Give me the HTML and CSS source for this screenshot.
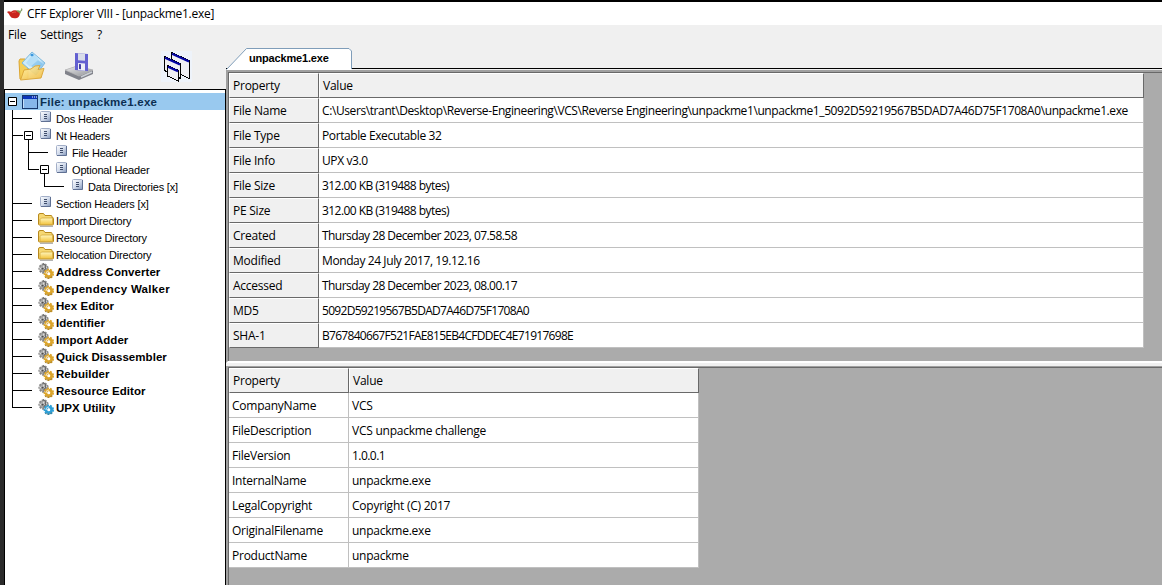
FILE: index.html
```html
<!DOCTYPE html>
<html lang="en">
<head>
<meta charset="utf-8">
<title>CFF Explorer VIII - [unpackme1.exe]</title>
<link rel="stylesheet" href="styles.css">
</head>
<body>
<svg width="0" height="0" class="defs">
  <defs>
    <linearGradient id="gPage" x1="0" y1="0" x2="1" y2="1"><stop offset="0" stop-color="#fff"/><stop offset=".5" stop-color="#d3dcec"/><stop offset="1" stop-color="#8397bb"/></linearGradient>
    <linearGradient id="gFold" x1="0" y1="0" x2="0" y2="1"><stop offset="0" stop-color="#fff6bd"/><stop offset="1" stop-color="#f3c440"/></linearGradient>
    <linearGradient id="gOpen" x1="0" y1="0" x2="1" y2="1"><stop offset="0" stop-color="#fff3b0"/><stop offset="1" stop-color="#f0b93a"/></linearGradient>
    <linearGradient id="gBlue" x1="0" y1="0" x2="1" y2="1"><stop offset="0" stop-color="#b9e2fa"/><stop offset=".5" stop-color="#d9f0fc"/><stop offset="1" stop-color="#58a9e0"/></linearGradient>
    <linearGradient id="gDrive" x1="0" y1="0" x2="1" y2="1"><stop offset="0" stop-color="#ececec"/><stop offset="1" stop-color="#8e9096"/></linearGradient>
    <symbol id="page" viewBox="0 0 12 12">
      <rect x=".5" y=".5" width="10" height="10" rx="1" fill="url(#gPage)" stroke="#a3afc8"/>
      <path d="M1 10.500h9.500V1" fill="none" stroke="#5f7093"/>
      <path d="M4 3.500h3M4 5.500h3M4 7.500h3" stroke="#3f4d6b"/>
    </symbol>
    <symbol id="folder" viewBox="0 0 16 14">
      <path d="M.5 11V2Q.5 .5 2 .5H5.500l1.500 2H13q1 0 1 1v1h.5q1 0 1 1v5.500q0 1-1 1H1.500Q.5 12 .5 11Z" fill="#f6d873" stroke="#b8891d"/>
      <path d="M3.500 5H14.500V11.500H2V6.500Z" fill="url(#gFold)" stroke="#d4a93a" stroke-width=".8"/>
      <path d="M2 13.300h13" stroke="#777" stroke-width=".7"/>
    </symbol>
    <symbol id="gears" viewBox="0 0 16 16">
      <ellipse cx="5.500" cy="5.500" rx="4.200" ry="4.400" fill="#a5a5a5" stroke="#868686" stroke-width="1.800" stroke-dasharray="1.900 1.100"/>
      <path d="M1.500 6l3.500-1.500L7 1.500M6 6l3-2" fill="none" stroke="#dedede" stroke-width="1.200"/>
      <path d="M5 .5l2.500 2v3L5.500 8.500" fill="none" stroke="#6a6a6a" stroke-width="1.200"/>
      <circle cx="4.500" cy="5.500" r="1.100" fill="#4c4c4c"/>
      <circle cx="10.800" cy="10.800" r="4.300" fill="none" stroke="currentColor" stroke-width="1.800" stroke-dasharray="1.900 1.100"/>
      <circle cx="10.800" cy="10.800" r="2.800" fill="none" stroke="currentColor" stroke-width="2.600"/>
      <path d="M8 11a3 3 0 0 1 3-3" fill="none" stroke="#fff" stroke-opacity=".65" stroke-width="1.200"/>
      <path d="M7 14.500q4 2 7.500-1" fill="none" stroke="#4b3a12" stroke-opacity=".35"/>
      <circle cx="10.800" cy="10.800" r="1.200" fill="#fff"/>
    </symbol>
    <symbol id="win" viewBox="0 0 16 14">
      <rect x=".5" y=".5" width="15" height="13" fill="#86b7ea" stroke="#16386c"/>
      <path d="M1 2.500h14" stroke="#0b35ba" stroke-width="3"/>
      <path d="M10 2h1M12 2h1M14 2h1" stroke="#fff"/>
      <path d="M1.500 4v9" stroke="#c4e0fa"/>
    </symbol>
    <symbol id="minus" viewBox="0 0 9 9"><path d="M.5.500h8v8h-8z" fill="#fff" stroke="#000"/><path d="M2 4.500h5" stroke="#000"/></symbol>
  </defs>
</svg>
<div class="window">
  <header class="titlebar">
    <svg class="chili" viewBox="0 0 16 12"><path d="M0 4Q1.500 2.500 4 3.700 7 1.700 9.500 2.500q3 .8 3.500 3-.5 4-4 4.700Q4.500 11 3 8 2 5.500 0 4Z" fill="#c9251d"/><path d="M5 4.800Q7.500 3.500 9 4.300" fill="none" stroke="#e2554a" stroke-width="1.100"/><path d="M9.500 2.500q3-1 4.500 1.500L13 6q-1.500-2-3.500-3Z" fill="#7da35b"/><path d="M13 3.500Q15.500 2.500 14.500 .5" fill="none" stroke="#829c63" stroke-width="1.200"/></svg>
    <span class="t-title">CFF Explorer VIII - [unpackme1.exe]</span>
  </header>
  <nav class="menu"><span>File</span><span>Settings</span><span>?</span></nav>
  <div class="body">
    <aside class="left">
      <div class="toolbar">
        <svg class="open" viewBox="0 0 28 30"><path d="M1 10l1-2h5l3 3v16l-8 1z" fill="#f5cf57" stroke="#dca52f"/><path d="M14 1l13 11-9 12L4 12Z" fill="url(#gBlue)" stroke="#7db9df"/><path d="M8 12l7-9 6 5-9 8z" fill="#a9d8f5" opacity=".7"/><path d="M20 9l5 4-6 7-6-5z" fill="#7fc0ec" opacity=".7"/><path d="M2.500 29L6 19l7-1 4-3 5-.5-2 4 6-1-3 9.500Z" fill="url(#gOpen)" fill-opacity=".9" stroke="#dda93c"/><path d="M14 2.500l2 1.500-2 1.500-2-1.500z" fill="#3794dc"/></svg>
        <svg class="save" viewBox="0 0 30 30"><path d="M1 19l12-4 16 4v4l-14 6L1 23Z" fill="#80828a"/><path d="M1 19l12-4 16 4-14 6Z" fill="url(#gDrive)" stroke="#b9b9b9" stroke-width=".7"/><path d="M17 26l11-5" stroke="#ccd0d6" stroke-width="1.500"/><path d="M11 2l13 1v17l-13-1Z" fill="#625fd0"/><path d="M14 2.200l7 .5v7l-7-.5Z" fill="#d8dce9"/><path d="M14 12l7 .5v7.200l-7-.6Z" fill="#eceef5"/><path d="M15 13v5l2 .2v-5Z" fill="#4341a8"/></svg>
        <svg class="wins" viewBox="0 0 31 31"><rect width="31" height="31" fill="#eef3fa"/><g stroke="#000" shape-rendering="crispEdges"><path d="M10.500 1.500l18 8v18l-18-8z" fill="#f0f0f4"/><path d="M3.500 5.500l16 7v15l-16-8z" fill="#f0f0f4"/><path d="M6.500 14.500l11 5v10.500l-11-5z" fill="#f0f0f4"/></g><path d="M11 2.800l17 7.600M4 6.800l15 6.600M7 15.800l10 4.500" stroke="#0505a5" stroke-width="2.200"/></svg>
      </div>
      <div class="tree">
        <svg class="lines" viewBox="0 0 60 320" shape-rendering="crispEdges"><path d="M7.500 12V318M8 28.500H27M8 45.500H18M8 113.500H27M8 130.500H27M8 147.500H27M8 164.500H27M8 181.500H27M8 198.500H27M8 215.500H27M8 232.500H27M8 249.500H27M8 266.500H27M8 283.500H27M8 300.500H27M7 317.500H27M23.500 46V80M24 62.500H43M24 79.500H34M39.500 80V97M39 96.500H59" stroke="#000" fill="none"/></svg>
        <div class="row root"><svg class="box"><use href="#minus"/></svg><svg class="i-win"><use href="#win"/></svg><span class="b l-root">File: unpackme1.exe</span></div>
        <div class="row d1"><svg class="i-page"><use href="#page"/></svg><span>Dos Header</span></div>
        <div class="row d1"><svg class="box"><use href="#minus"/></svg><svg class="i-page"><use href="#page"/></svg><span>Nt Headers</span></div>
        <div class="row d2"><svg class="i-page"><use href="#page"/></svg><span>File Header</span></div>
        <div class="row d2"><svg class="box"><use href="#minus"/></svg><svg class="i-page"><use href="#page"/></svg><span>Optional Header</span></div>
        <div class="row d3"><svg class="i-page"><use href="#page"/></svg><span>Data Directories [x]</span></div>
        <div class="row d1"><svg class="i-page"><use href="#page"/></svg><span>Section Headers [x]</span></div>
        <div class="row d1"><svg class="i-fold"><use href="#folder"/></svg><span>Import Directory</span></div>
        <div class="row d1"><svg class="i-fold"><use href="#folder"/></svg><span>Resource Directory</span></div>
        <div class="row d1"><svg class="i-fold"><use href="#folder"/></svg><span>Relocation Directory</span></div>
        <div class="row d1"><svg class="i-gear"><use href="#gears"/></svg><span class="b">Address Converter</span></div>
        <div class="row d1"><svg class="i-gear"><use href="#gears"/></svg><span class="b wide">Dependency Walker</span></div>
        <div class="row d1"><svg class="i-gear"><use href="#gears"/></svg><span class="b">Hex Editor</span></div>
        <div class="row d1"><svg class="i-gear"><use href="#gears"/></svg><span class="b">Identifier</span></div>
        <div class="row d1"><svg class="i-gear"><use href="#gears"/></svg><span class="b">Import Adder</span></div>
        <div class="row d1"><svg class="i-gear"><use href="#gears"/></svg><span class="b">Quick Disassembler</span></div>
        <div class="row d1"><svg class="i-gear"><use href="#gears"/></svg><span class="b">Rebuilder</span></div>
        <div class="row d1"><svg class="i-gear"><use href="#gears"/></svg><span class="b">Resource Editor</span></div>
        <div class="row d1"><svg class="i-gear blue"><use href="#gears"/></svg><span class="b">UPX Utility</span></div>
      </div>
    </aside>
    <main class="right">
      <div class="tabs"><svg class="tabshape" viewBox="0 0 127 22"><path d="M0 22L20.500.500H123L125.500 3V22Z" fill="#fff"/><path d="M.5 21.500L20.500.500H123L125.500 3V21" fill="none" stroke="#7f9db9"/></svg><span class="tabtext">unpackme1.exe</span></div>
      <section class="pane top">
        <div class="grid g1">
          <div class="h">Property</div><div class="h">Value</div>
          <div class="k">File Name</div><div class="c path">C:\Users\trant\Desktop\Reverse-Engineering\VCS\Reverse Engineering\unpackme1\unpackme1_5092D59219567B5DAD7A46D75F1708A0\unpackme1.exe</div>
          <div class="k">File Type</div><div class="c path">Portable Executable 32</div>
          <div class="k">File Info</div><div class="c path">UPX v3.0</div>
          <div class="k">File Size</div><div class="c num">312.00 KB (319488 bytes)</div>
          <div class="k">PE Size</div><div class="c num">312.00 KB (319488 bytes)</div>
          <div class="k">Created</div><div class="c num">Thursday 28 December 2023, 07.58.58</div>
          <div class="k">Modified</div><div class="c path">Monday 24 July 2017, 19.12.16</div>
          <div class="k">Accessed</div><div class="c num">Thursday 28 December 2023, 08.00.17</div>
          <div class="k">MD5</div><div class="c hash">5092D59219567B5DAD7A46D75F1708A0</div>
          <div class="k">SHA-1</div><div class="c hash">B767840667F521FAE815EB4CFDDEC4E71917698E</div>
        </div>
      </section>
      <section class="pane bottom">
        <div class="grid g2">
          <div class="h">Property</div><div class="h">Value</div>
          <div class="c">CompanyName</div><div class="c">VCS</div>
          <div class="c">FileDescription</div><div class="c">VCS unpackme challenge</div>
          <div class="c">FileVersion</div><div class="c num">1.0.0.1</div>
          <div class="c">InternalName</div><div class="c">unpackme.exe</div>
          <div class="c">LegalCopyright</div><div class="c">Copyright (C) 2017</div>
          <div class="c">OriginalFilename</div><div class="c">unpackme.exe</div>
          <div class="c">ProductName</div><div class="c">unpackme</div>
        </div>
      </section>
    </main>
  </div>
</div>
</body>
</html>
```
FILE: styles.css
```css
* { box-sizing: border-box; }
body { margin: 0; width: 1162px; height: 585px; overflow: hidden; background: #f0f0f0; color: #000; font: 12px/16px "Open Sans", "Noto Sans", sans-serif; white-space: nowrap; }
svg { display: block; flex: none; }
.defs { position: absolute; }
.window { height: 585px; padding-top: 2px; border-left: 4px solid #2b2b2b; display: flex; flex-direction: column; box-shadow: inset 0 2px #000; }
.titlebar { height: 23px; flex: none; background: #fff; display: flex; align-items: center; padding-left: 3px; gap: 4px; }
.chili { width: 16px; height: 12px; }
.t-title { letter-spacing: -.28px; }
.menu { height: 20px; flex: none; display: flex; align-items: center; padding-left: 4px; gap: 14px; letter-spacing: -.2px; }
.body { flex: 1; display: flex; min-height: 0; }
.left { width: 222px; flex: none; display: flex; flex-direction: column; }
.toolbar { height: 44px; flex: none; display: flex; padding: 6px 0 0 14px; }
.open { width: 28px; height: 30px; }
.save { width: 30px; height: 30px; margin-left: 18px; }
.wins { width: 31px; height: 31px; margin-left: 67px; }
.tree { position: relative; flex: 1; background: #fff; border: 1px solid #000; border-bottom: 0; padding-top: 3px; font: 11px/17px "Liberation Sans", Arial, sans-serif; letter-spacing: -.18px; }
.lines { position: absolute; left: 0; top: 0; width: 60px; height: 320px; }
.row { position: relative; height: 17px; display: flex; align-items: center; }
.row span { padding-top: 2px; }
.row .box { position: absolute; left: 3px; top: 4px; width: 9px; height: 9px; }
.root { background: #99c9ef; padding-left: 17px; gap: 2px; }
.d1 { padding-left: 33px; } .d2 { padding-left: 49px; } .d3 { padding-left: 65px; }
.d1 .box { left: 19px; } .d2 .box { left: 35px; }
.i-win { width: 16px; height: 14px; }
.i-page { width: 12px; height: 12px; margin: -3px 4px 0 2px; }
.i-fold { width: 16px; height: 14px; margin: -2px 2px 0 0; }
.i-gear { width: 16px; height: 16px; margin: -2px 2px 0 0; color: #dba52c; }
.blue { color: #2e9fd6; }
.b { font-weight: 700; font-size: 11.5px; letter-spacing: .05px; }
.wide { letter-spacing: .3px; }
.l-root { color: #0c2f52; letter-spacing: .25px; }
.right { flex: 1; min-width: 0; display: flex; flex-direction: column; }
.tabs { height: 24px; flex: none; position: relative; border-bottom: 1px solid #000; }
.tabshape { position: absolute; left: 0; top: 3px; width: 127px; height: 22px; }
.tabtext { position: absolute; left: 23px; top: 5px; font: bold 11px/16px "Liberation Sans", Arial, sans-serif; letter-spacing: -.18px; }
.pane { background: #ababab; border-left: 2px solid #a0a0a0; box-shadow: inset 1px 1px #696969; padding: 1px 0 0 1px; }
.top { height: 293px; flex: none; margin-top: 1px; border-top: 2px solid #a0a0a0; border-bottom: 2px solid #fff; }
.bottom { flex: 1; margin-top: 3px; border-top: 1px solid #a0a0a0; }
.grid { display: grid; grid-auto-rows: 25px; line-height: 25px; letter-spacing: -.24px; }
.g1 { width: 915px; grid-template-columns: 90px 825px; }
.g2 { width: 470px; grid-template-columns: 120px 350px; }
.h, .k { background: #f0f0f0; border-right: 1px solid #696969; border-bottom: 1px solid #696969; border-left: 1px solid #fff; border-top: 1px solid #fff; padding-left: 3px; line-height: 23px; }
.c { background: #fff; border-right: 1px solid #c0c0c0; border-bottom: 1px solid #c0c0c0; padding-left: 3px; }
.path { letter-spacing: -.4px; }
.num { letter-spacing: -.55px; }
.hash { letter-spacing: -.7px; }
```
